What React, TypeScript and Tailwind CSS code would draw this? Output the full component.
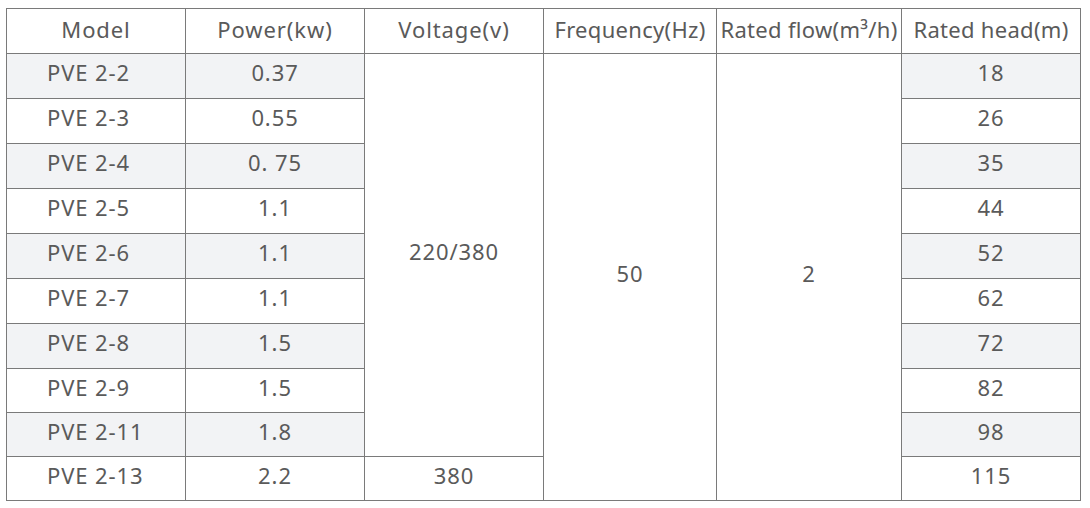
import React from "react";

const rows = [
  ["PVE 2-2", "0.37", "18"],
  ["PVE 2-3", "0.55", "26"],
  ["PVE 2-4", "0. 75", "35"],
  ["PVE 2-5", "1.1", "44"],
  ["PVE 2-6", "1.1", "52"],
  ["PVE 2-7", "1.1", "62"],
  ["PVE 2-8", "1.5", "72"],
  ["PVE 2-9", "1.5", "82"],
  ["PVE 2-11", "1.8", "98"],
  ["PVE 2-13", "2.2", "115"],
];

export default function App() {
  const headers = ["Model", "Power(kw)", "Voltage(v)", "Frequency(Hz)", "Rated flow(m³/h)", "Rated head(m)"];
  return (
    <div className="w-[1090px] h-[508px] bg-white pt-[8px] pl-[6px]" style={{ fontFamily: '"Noto Sans", "Open Sans", sans-serif' }}>
      <div className="inline-grid grid-cols-[178px_178px_178px_172px_184px_178px] grid-rows-[44px_repeat(7,44px)_repeat(3,43px)] gap-px p-px bg-[#7a7a7a] text-[22px] text-[#5a5a5a] leading-none tracking-[0.9px]">
        {headers.map((h) => (
          <div key={h} className="bg-white flex items-center justify-center pb-[5px] whitespace-nowrap">
            <span className={h.startsWith("Frequency") || h.startsWith("Rated") ? "tracking-[0.3px]" : ""}>{h}</span>
          </div>
        ))}
        {rows.map((r, i) => {
          const shade = i % 2 === 0 && i < 9 ? "bg-[#f2f3f5]" : "bg-white";
          return (
            <React.Fragment key={r[0]}>
              <div className={`${shade} flex items-center pl-[40px] pb-[8px]`}>{r[0]}</div>
              <div className={`${shade} flex items-center justify-center pb-[8px]`}>{r[1]}</div>
              {i === 0 && (
                <>
                  <div className="bg-white row-span-9 flex items-center justify-center pb-[8px]">220/380</div>
                  <div className="bg-white row-span-10 flex items-center justify-center pb-[8px]">50</div>
                  <div className="bg-white row-span-10 flex items-center justify-center pb-[8px]">2</div>
                </>
              )}
              {i === 9 && <div className="bg-white flex items-center justify-center pb-[8px]">380</div>}
              <div className={`${shade} flex items-center justify-center pb-[8px]`}>{r[2]}</div>
            </React.Fragment>
          );
        })}
      </div>
    </div>
  );
}
